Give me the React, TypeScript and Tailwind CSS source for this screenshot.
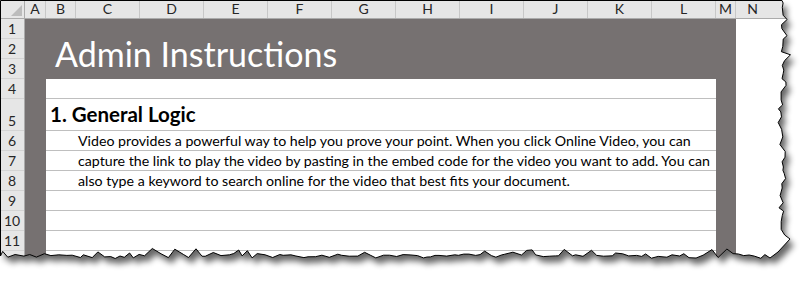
import React from "react";

const font = { fontFamily: "Lato, 'Open Sans', sans-serif" };

const columns = [
  { label: "A", w: "w-[21px]" },
  { label: "B", w: "w-[30px]" },
  { label: "C", w: "w-[64px]" },
  { label: "D", w: "w-[64px]" },
  { label: "E", w: "w-[64px]" },
  { label: "F", w: "w-[64px]" },
  { label: "G", w: "w-[64px]" },
  { label: "H", w: "w-[64px]" },
  { label: "I", w: "w-[64px]" },
  { label: "J", w: "w-[64px]" },
  { label: "K", w: "w-[64px]" },
  { label: "L", w: "w-[64px]" },
  { label: "M", w: "w-[20px]" },
];

const rowHeights = [
  "h-[20px]", "h-[20px]", "h-[20px]", "h-[20px]", "h-[32px]", "h-[20px]",
  "h-[20px]", "h-[20px]", "h-[20px]", "h-[20px]", "h-[20px]",
];

const bodyLines = [
  "Video provides a powerful way to help you prove your point. When you click Online Video, you can",
  "capture the link to play the video by pasting in the embed code for the video you want to add. You can",
  "also type a keyword to search online for the video that best fits your document.",
];

// seeded noise so the torn edge is the same on every render
function makeRng(seed: number) {
  let s = seed;
  return () => {
    s = (s * 16807) % 2147483647;
    return (s - 1) / 2147483646;
  };
}

function tornPath() {
  const r = makeRng(42);
  const pts: string[] = ["M0.5,0.5", "L782,0.5"];
  let y = 0;
  while (y < 232) {
    y += 3 + r() * 5;
    let x = 783 + (r() - 0.5) * 6;
    if (r() > 0.8) x += (r() - 0.5) * 16;
    pts.push(`L${x.toFixed(1)},${Math.min(y, 236).toFixed(1)}`);
  }
  pts.push("L790,239", "L778,252", "L770,258");
  let x = 770;
  while (x > 4) {
    x -= 3 + r() * 6;
    let yy = 256 + (r() - 0.5) * 5;
    if (r() > 0.8) yy -= r() * 6;
    pts.push(`L${Math.max(x, 0.5).toFixed(1)},${yy.toFixed(1)}`);
  }
  pts.push("L0.5,256", "Z");
  return pts.join(" ");
}

function TornEdge() {
  const d = tornPath();
  return (
    <svg className="absolute inset-0 pointer-events-none" width={809} height={282}>
      <defs>
        <filter id="soft" x="-10%" y="-10%" width="130%" height="140%">
          <feGaussianBlur stdDeviation="3" />
        </filter>
        <mask id="outside">
          <rect x="0" y="0" width="809" height="282" fill="white" />
          <path d={d} fill="black" />
        </mask>
      </defs>
      <rect x="0" y="0" width="809" height="282" fill="white" mask="url(#outside)" />
      <g mask="url(#outside)">
        <path d={d} transform="translate(4,6)" fill="#000" opacity={0.6} filter="url(#soft)" />
      </g>
      <path d={d} fill="none" stroke="#000" strokeWidth={1} />
    </svg>
  );
}

function ColumnHeader() {
  return (
    <div className="flex h-[19px] bg-[#e6e6e6] border-b border-[#ababab] text-[14px] text-[#262626]">
      <div className="w-[25px] relative border-r border-[#ababab]">
        <svg className="absolute right-[2px] bottom-[2px]" width={11} height={11}>
          <polygon points="11,0 11,11 0,11" fill="#bcbcbc" />
        </svg>
      </div>
      {columns.map((c) => (
        <div key={c.label} className={`${c.w} shrink-0 border-r border-[#c8c8c8] flex items-center justify-center leading-none`}>
          {c.label}
        </div>
      ))}
      <div className="flex-1 flex items-center justify-center leading-none pr-[40px]">N</div>
    </div>
  );
}

function RowHeader() {
  return (
    <div className="w-[25px] shrink-0 bg-[#e6e6e6] border-r border-[#ababab] text-[14px] text-[#262626]">
      {rowHeights.map((h, i) => (
        <div key={i} className={`${h} border-b border-[#d4d4d4] flex items-end justify-center pb-[1px] leading-[16px]`}>
          {i + 1}
        </div>
      ))}
      <div className="h-[40px]" />
    </div>
  );
}

function Sheet() {
  return (
    <div className="w-[711px] shrink-0 bg-[#767171] pl-[21px] pr-[20px]">
      <div className="h-[60px] -ml-[21px] pl-[30px] flex items-end pb-[5px]">
        <div className="text-white text-[34px] font-normal leading-[40px] whitespace-nowrap">Admin Instructions</div>
      </div>
      <div className="bg-white text-black">
        <div className="h-[20px] border-b border-[#bfbfbf]" />
        <div className="h-[32px] border-b border-[#bfbfbf] flex items-end pl-[4px] pb-[3px]">
          <div className="text-[20.5px] font-bold leading-[26px] whitespace-nowrap">1. General Logic</div>
        </div>
        {bodyLines.map((line, i) => (
          <div key={i} className="h-[20px] border-b border-[#bfbfbf] flex items-end pl-[32px]">
            <div className="text-[14.2px] leading-[18px] whitespace-nowrap">{line}</div>
          </div>
        ))}
        <div className="h-[20px] border-b border-[#bfbfbf]" />
        <div className="h-[20px] border-b border-[#bfbfbf]" />
        <div className="h-[20px] border-b border-[#bfbfbf]" />
        <div className="h-[40px]" />
      </div>
    </div>
  );
}

export default function App() {
  return (
    <div className="relative w-[809px] h-[282px] overflow-hidden bg-white" style={font}>
      <ColumnHeader />
      <div className="flex">
        <RowHeader />
        <Sheet />
        <div className="flex-1 bg-white" />
      </div>
      <TornEdge />
    </div>
  );
}
